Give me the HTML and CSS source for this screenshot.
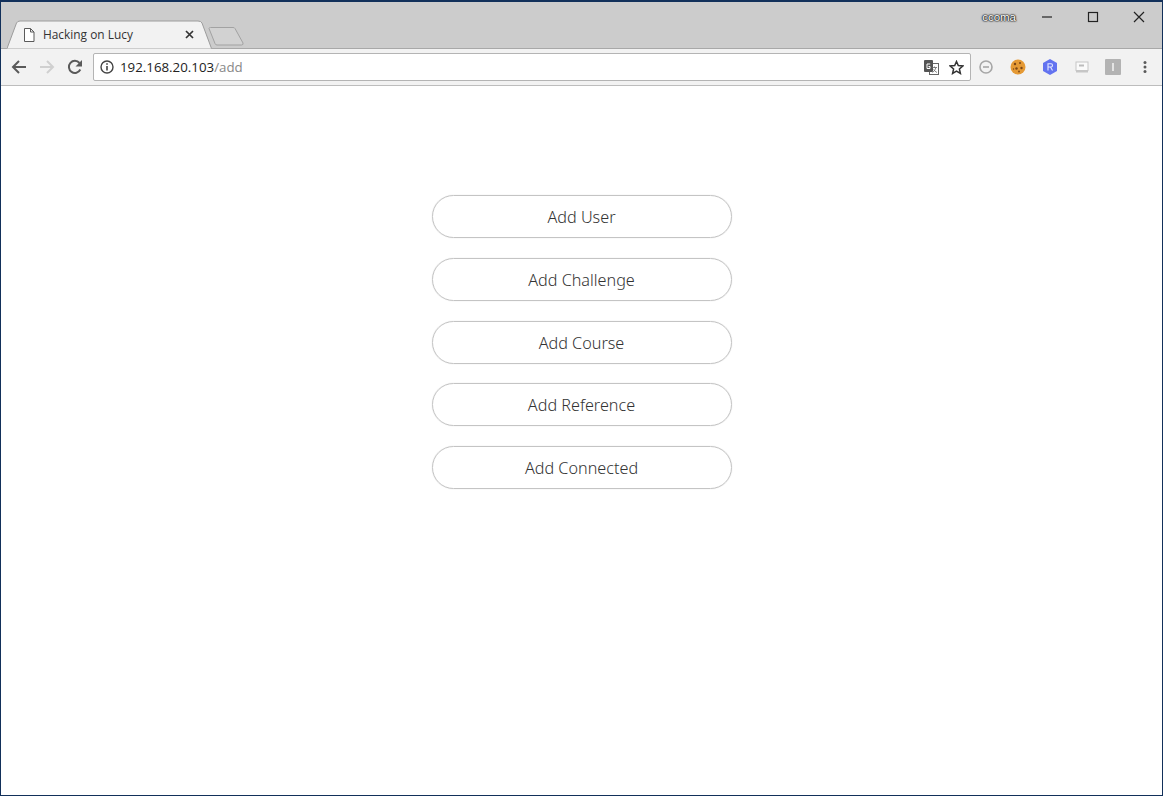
FILE: index.html
```html
<!DOCTYPE html>
<html lang="en">
<head>
    <meta charset="UTF-8">
    <meta name="viewport" content="width=device-width, initial-scale=1.0">
    <title>Hacking on Lucy</title>
    <link rel="stylesheet" href="styles.css">
</head>
<body>
    <div class="window">
        <!-- Tab strip -->
        <div class="titlebar">
            <div class="tab">
                <svg class="tab-shape" width="205" height="29" viewBox="0 0 205 29">
                    <path d="M0 28.500 L9.500 3 Q10.500 1 13 1 H191 Q194 1 195 3 L204.500 28.500" fill="#f2f2f2" stroke="#9c9c9c"/>
                </svg>
                <svg class="tab-icon" width="12" height="14" viewBox="0 0 12 14">
                    <path d="M1.500 .5 H7.500 L11 4 V13.500 H1.500 Z M7.500 .5 V4 H11" fill="#fff" stroke="#5a5a5a"/>
                </svg>
                <span class="tab-title">Hacking on Lucy</span>
                <svg class="tab-close" width="9" height="9" viewBox="0 0 9 9">
                    <path d="M1 1 L8 8 M8 1 L1 8" stroke="#333" stroke-width="1.700"/>
                </svg>
            </div>
            <svg class="new-tab" width="36" height="19" viewBox="0 0 36 19">
                <path d="M1 1.500 Q1 .5 2.500 .5 H25 Q26.500 .5 27 1.500 L35 16 Q35.500 18 33.500 18 H9 Q7.500 18 7 16.500 Z" fill="#d2d2d2" stroke="#a2a2a2"/>
            </svg>
            <div class="spacer"></div>
            <span class="profile">ccoma</span>
            <div class="win-controls">
                <svg width="46" height="30" viewBox="0 0 46 30"><path d="M18 16 H28" stroke="#222" stroke-width="1.200"/></svg>
                <svg width="46" height="30" viewBox="0 0 46 30"><rect x="18.500" y="11.500" width="9" height="9" fill="none" stroke="#222" stroke-width="1.200"/></svg>
                <svg width="46" height="30" viewBox="0 0 46 30"><path d="M18 11 L28 21 M28 11 L18 21" stroke="#222" stroke-width="1.200"/></svg>
            </div>
        </div>

        <!-- Address bar and extensions -->
        <div class="toolbar">
            <svg class="nav-icon" width="16" height="16" viewBox="0 0 16 16">
                <path d="M15 8 H2 M8 2 L2 8 L8 14" fill="none" stroke="#5a5a5a" stroke-width="2"/>
            </svg>
            <svg class="nav-icon" width="16" height="16" viewBox="0 0 16 16">
                <path d="M1 8 H14 M8 2 L14 8 L8 14" fill="none" stroke="#d0d0d0" stroke-width="2"/>
            </svg>
            <svg class="nav-icon" width="16" height="16" viewBox="0 0 16 16">
                <path d="M13.300 10.500 A6 6 0 1 1 12.500 4" fill="none" stroke="#5a5a5a" stroke-width="2"/>
                <path d="M15 1 V7.500 H8.500 Z" fill="#5a5a5a"/>
            </svg>
            <div class="omnibox">
                <svg class="info" width="14" height="14" viewBox="0 0 14 14">
                    <circle cx="7" cy="7" r="6" fill="none" stroke="#444" stroke-width="1.400"/>
                    <path d="M7 6 V10.500 M7 3.200 V4.800" stroke="#444" stroke-width="1.600"/>
                </svg>
                <span class="url">192.168.20.103<span class="url-path">/add</span></span>
                <svg class="translate" width="15" height="15" viewBox="0 0 15 15">
                    <rect x="5.500" y="3.500" width="9" height="11" fill="#fff" stroke="#666"/>
                    <rect x="0" y="0" width="9" height="12" rx="1" fill="#555"/>
                    <path d="M6.200 4 H3 V8.500 H6 V6.500 H4.500" fill="none" stroke="#fff"/>
                    <path d="M8 7.500 H13 M10.500 6.500 V7.500 M12 7.500 Q11 11 8.500 12.500 M9.500 9.500 Q11 11.500 13 12.500" fill="none" stroke="#666" stroke-width=".8"/>
                </svg>
                <svg class="star" width="15" height="15" viewBox="0 0 15 15">
                    <path d="M7.500 1.500 L9.300 5.600 L13.800 6 L10.400 9 L11.400 13.400 L7.500 11.100 L3.600 13.400 L4.600 9 L1.200 6 L5.700 5.600 Z" fill="none" stroke="#333" stroke-width="1.500"/>
                </svg>
            </div>
            <div class="extensions">
                <svg width="14" height="14" viewBox="0 0 14 14">
                    <circle cx="7" cy="7" r="6" fill="none" stroke="#a6a6a6" stroke-width="1.600"/>
                    <path d="M4 7 H10" stroke="#a6a6a6" stroke-width="1.600"/>
                </svg>
                <svg width="16" height="16" viewBox="0 0 16 16">
                    <circle cx="8" cy="8" r="7.500" fill="#e59a35"/>
                    <circle cx="5" cy="5" r="1.200" fill="#7a4516"/>
                    <circle cx="10" cy="4" r="1" fill="#7a4516"/>
                    <circle cx="11.500" cy="9" r="1.200" fill="#7a4516"/>
                    <circle cx="6.500" cy="9.500" r="1.200" fill="#7a4516"/>
                    <circle cx="9" cy="12.500" r=".9" fill="#7a4516"/>
                    <circle cx="3.500" cy="10" r=".7" fill="#7a4516"/>
                </svg>
                <svg width="16" height="16" viewBox="0 0 16 16">
                    <path d="M8 0 L15 4 V12 L8 16 L1 12 V4 Z" fill="#6373f0"/>
                    <path d="M6 11.500 V4.800 H9 Q10.500 4.800 10.500 6.400 Q10.500 8 9 8 H6 M8.500 8 L10.500 11.500" fill="none" stroke="#e4e7ff" stroke-width="1.100"/>
                </svg>
                <svg width="14" height="14" viewBox="0 0 14 14">
                    <rect x="1" y="2" width="12" height="8.500" fill="#fafafa" stroke="#c6c6c6"/>
                    <rect x="1" y="10.500" width="12" height="2" fill="#c6c6c6"/>
                    <rect x="4" y="4.500" width="5" height="2" fill="#bcbcbc"/>
                </svg>
                <svg width="16" height="16" viewBox="0 0 16 16">
                    <rect width="16" height="16" rx="1" fill="#b3b3b3"/>
                    <rect x="7.200" y="4" width="1.600" height="8" fill="#f0f0f0"/>
                </svg>
                <svg width="14" height="14" viewBox="0 0 14 14">
                    <circle cx="7" cy="2.500" r="1.500" fill="#5a5a5a"/>
                    <circle cx="7" cy="7" r="1.500" fill="#5a5a5a"/>
                    <circle cx="7" cy="11.500" r="1.500" fill="#5a5a5a"/>
                </svg>
            </div>
        </div>

        <!-- Page -->
        <div class="page">
            <a class="pill" href="#">Add User</a>
            <a class="pill" href="#">Add Challenge</a>
            <a class="pill" href="#">Add Course</a>
            <a class="pill" href="#">Add Reference</a>
            <a class="pill" href="#">Add Connected</a>
        </div>
    </div>
</body>
</html>
```

FILE: styles.css
```css
* {
    margin: 0;
    padding: 0;
    box-sizing: border-box;
}

html, body {
    height: 100%;
    overflow: hidden;
}

body {
    font-family: "Noto Sans", sans-serif;
    background-color: #fff;
}

.window {
    height: 100vh;
    display: flex;
    flex-direction: column;
    border: 1px solid #12305a;
    border-top-width: 2px;
}

.titlebar {
    height: 47px;
    display: flex;
    align-items: flex-end;
    padding-left: 6px;
    background-color: #cccccc;
    border-bottom: 1px solid #a8a8a8;
}

.tab {
    position: relative;
    width: 205px;
    height: 29px;
    margin-bottom: -1px;
    display: flex;
    align-items: center;
    padding: 0 18px 0 16px;
    font-family: "Open Sans", sans-serif;
    font-size: 11.900px;
    color: #333;
}

.tab-shape {
    position: absolute;
    left: 0;
    top: 0;
}

.tab-icon,
.tab-title,
.tab-close {
    position: relative;
}

.tab-icon {
    margin-right: 8px;
}

.tab-title {
    flex: 1;
    margin-bottom: 2px;
}

.new-tab {
    margin: 0 0 2px -4px;
}

.spacer {
    flex: 1;
}

.profile {
    align-self: flex-start;
    margin: 9px 8px 0 0;
    font-family: "Liberation Sans", sans-serif;
    font-size: 11.500px;
    color: #fff;
    text-shadow: 0 0 1px #111, 0 0 1px #111, 0 0 2px #333, 0 0 2px #333;
}

.win-controls {
    align-self: flex-start;
    display: flex;
    margin-top: -1px;
}

.toolbar {
    height: 37px;
    display: flex;
    align-items: center;
    padding: 0 10px;
    background-color: #f2f2f2;
    border-bottom: 1px solid #bdbdbd;
}

.nav-icon {
    margin-right: 12px;
    flex-shrink: 0;
}

.omnibox {
    width: 878px;
    height: 28px;
    margin-left: -2px;
    display: flex;
    align-items: center;
    padding: 0 6px;
    background-color: #fff;
    border: 1px solid #b4b4b4;
    border-radius: 2px;
}

.info {
    margin-right: 6px;
}

.url {
    flex: 1;
    font-family: "Open Sans", sans-serif;
    font-size: 13.300px;
    color: #222;
}

.url-path {
    color: #888;
}

.translate {
    margin-right: 10px;
}

.extensions {
    flex: 1;
    display: flex;
    align-items: center;
    gap: 16.600px;
    padding-left: 8px;
}

.page {
    flex: 1;
    display: flex;
    flex-direction: column;
    align-items: center;
    gap: 19.800px;
    padding-top: 109px;
    background-color: #fff;
}

.pill {
    width: 300px;
    height: 43px;
    flex-shrink: 0;
    display: flex;
    align-items: center;
    justify-content: center;
    padding-top: 1px;
    border: 1px solid #c4c4c4;
    border-radius: 22px;
    box-shadow: 0 0 1px #c8c8c8;
    font-size: 16.200px;
    font-weight: 300;
    color: #333;
    text-decoration: none;
}
```
